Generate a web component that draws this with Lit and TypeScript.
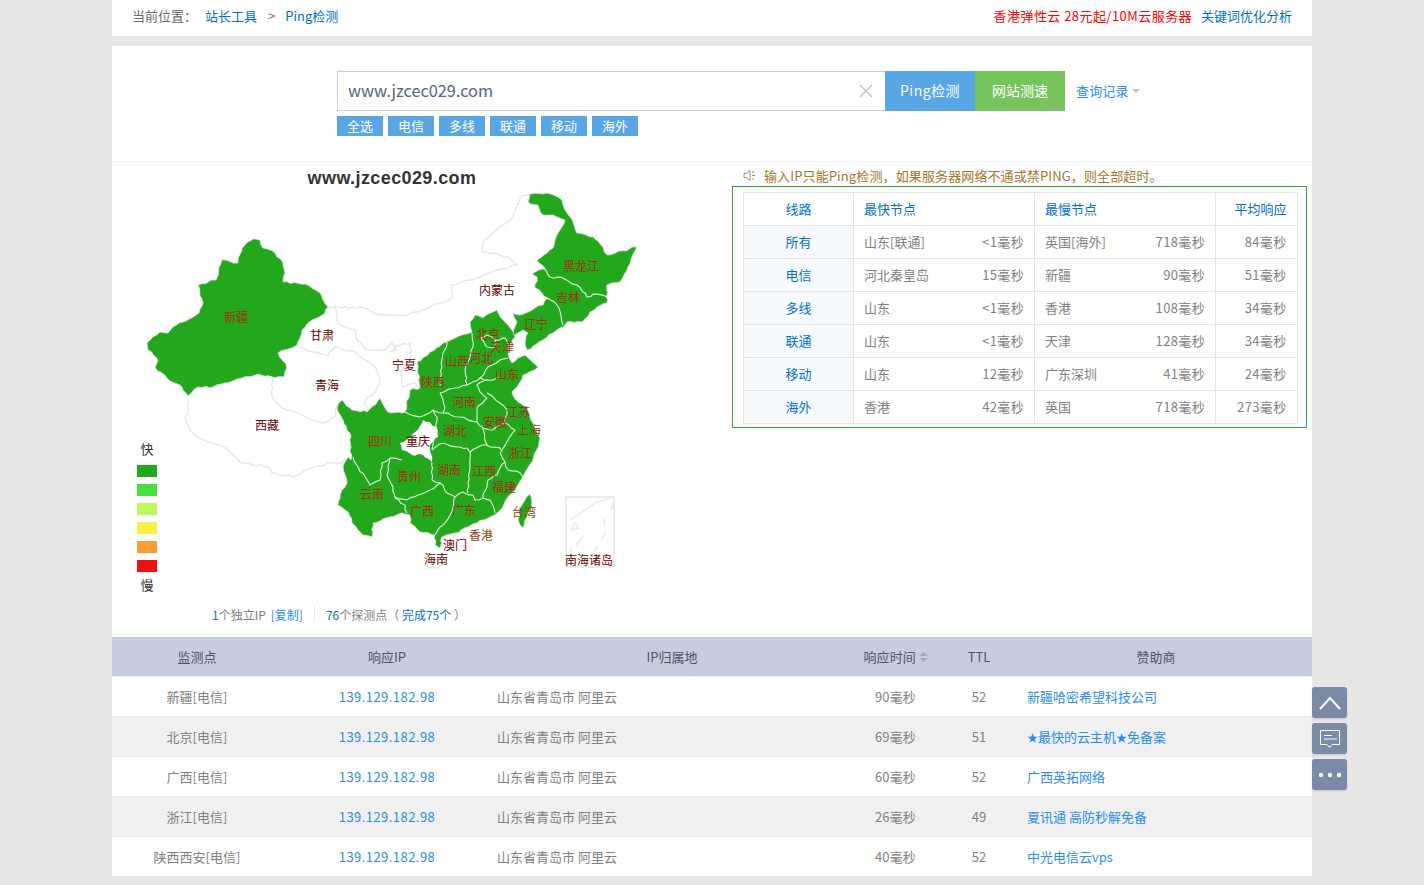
import { LitElement, html, css, svg } from "lit";
import { customElement } from "lit/decorators.js";

const summary = [
  ["所有", "山东[联通]", "<1毫秒", "英国[海外]", "718毫秒", "84毫秒"],
  ["电信", "河北秦皇岛", "15毫秒", "新疆", "90毫秒", "51毫秒"],
  ["多线", "山东", "<1毫秒", "香港", "108毫秒", "34毫秒"],
  ["联通", "山东", "<1毫秒", "天津", "128毫秒", "34毫秒"],
  ["移动", "山东", "12毫秒", "广东深圳", "41毫秒", "24毫秒"],
  ["海外", "香港", "42毫秒", "英国", "718毫秒", "273毫秒"],
];

const results = [
  ["新疆[电信]", "90毫秒", "52", "新疆哈密希望科技公司"],
  ["北京[电信]", "69毫秒", "51", "★最快的云主机★免备案"],
  ["广西[电信]", "60毫秒", "52", "广西英拓网络"],
  ["浙江[电信]", "26毫秒", "49", "夏讯通 高防秒解免备"],
  ["陕西西安[电信]", "40毫秒", "52", "中光电信云vps"],
];

const chips = ["全选", "电信", "多线", "联通", "移动", "海外"];
const legend = ["#23a71d", "#43e240", "#bdf75c", "#f9ef47", "#fb9b35", "#e91313"];

// map shapes, in page coordinates (the svg viewBox starts at the panel's corner)
const green = [
  "253,239 260,240 263,248 275,253 283,263 285,273 283,282 305,284 320,293 328,307 325,313 312,320 302,330 297,345 278,353 287,368 284,377 272,377 258,374 242,378 225,383 213,387 198,387 188,396 182,387 167,378 155,367 158,360 148,350 147,343 160,332 168,333 173,327 183,322 199,313 203,303 198,285 216,280 222,260 238,263 242,248",
  "530,194 547,193 562,200 567,213 574,225 577,233 593,237 603,247 607,255 637,247 628,267 620,282 607,285 607,303 597,307 582,322 567,322 563,327 543,340 527,350 525,343 528,333 523,330 510,337 517,322 513,313 520,315 543,305 548,298 535,288 537,277 532,274 545,268 537,260 553,248 560,230 565,220 553,215 543,215 538,205 528,202",
  "470,322 475,315 483,318 497,310 503,320 508,325 515,337 508,347 510,360 512,363 525,355 538,367 523,375 517,387 512,392 518,402 527,408 533,423 540,438 533,460 523,477 512,493 497,513 477,523 468,527 455,533 442,537 440,548 435,545 435,535 420,532 410,523 410,515 402,513 390,517 373,523 372,537 363,535 352,523 348,512 338,505 340,495 347,483 343,467 348,457 351,460 350,433 343,420 337,408 342,400 352,410 367,412 380,398 388,412 402,413 405,412 410,390 420,388 417,362 430,352 443,343 462,335 472,332",
  "530,494 532,503 527,517 523,528 518,520 520,508 525,500",
];

const chongqing = "423,420 430,422 438,430 438,437 430,445 432,462 423,455 412,455 402,450 400,443 410,437 422,423";

const whiteLines = [
  "543,268 550,277 563,278 577,285 587,297 597,294 607,297",
  "547,298 557,305 563,325",
  "353,457 358,467 370,485 380,480 382,463 390,458 402,460",
  "390,458 387,475 393,487 395,498 405,505 407,513",
  "395,497 407,500 418,495 430,490 440,483 447,493 455,497 463,492 473,495 475,500 483,498 490,500 495,513",
  "455,497 453,508 443,525 435,535",
  "432,462 432,480 440,483",
  "432,450 443,443 457,447 467,448 470,452",
  "470,452 470,467 468,483 468,493",
  "500,452 505,462 497,475 488,480 483,498",
  "470,452 483,445 500,448 502,452",
  "505,462 508,470 520,473 523,477",
  "433,410 443,413 460,417 477,422 482,427 487,445",
  "405,412 420,417 433,410 437,417 435,437 432,450",
  "440,393 445,408 443,413",
  "440,393 455,388 467,385 480,378 487,380",
  "477,422 477,408 487,398 480,392 477,385 487,380 500,378",
  "487,393 500,403 507,410 505,423 515,430",
  "482,427 493,430 505,423",
  "515,430 508,440 502,450",
  "447,342 442,360 440,387",
  "472,333 473,347 465,370 467,385",
  "480,378 488,367 500,360 508,358",
  "480,338 487,335 495,340 495,347 487,347 480,338",
  "495,340 505,338 510,350",
];

const greyLines = [
  "530,194 520,198 513,217 493,233 483,243 482,252 493,253 508,257 517,265 497,270 477,278 452,285 452,298 430,307 407,315 380,315 365,308 328,307",
  "335,307 338,323 355,330 357,340 368,350 385,350 392,343 397,350 390,352 395,346 410,343 411,357 400,373 403,387 415,383 420,388",
  "297,345 312,352 328,355 335,347 355,352 375,367 380,378 375,392 365,400 367,410",
  "272,378 272,397 282,408 302,415 322,423 335,417 338,403",
  "188,397 188,413 185,418 190,430 197,437 225,448 242,463 268,467 272,473 293,477 312,468 328,463 343,463 345,458",
  "427,563 437,560 445,560 437,568 428,568 427,563",
];

const southSea = [
  "570,520 582,512 595,503 610,498",
  "575,522 571,530 578,528 575,522",
  "576,545 583,537",
  "570,555 572,548",
  "604,518 605,526",
  "601,540 606,532",
  "592,555 598,546",
  "611,510 614,501",
];

// [name, x, y, kind] kind: g = on green, w = on white, b = at the coast
const labels: [string, number, number, string][] = [
  ["新疆", 236, 317, "g"], ["甘肃", 322, 335, "w"], ["青海", 327, 385, "w"], ["西藏", 267, 425, "w"],
  ["内蒙古", 497, 290, "w"], ["黑龙江", 581, 266, "g"], ["吉林", 568, 297, "g"], ["辽宁", 536, 324, "g"],
  ["北京", 488, 334, "g"], ["天津", 502, 347, "g"], ["河北", 481, 358, "g"], ["山西", 457, 361, "g"],
  ["宁夏", 404, 365, "w"], ["陕西", 433, 382, "g"], ["山东", 507, 374, "g"], ["河南", 464, 402, "g"],
  ["江苏", 518, 412, "g"], ["安徽", 495, 422, "g"], ["上海", 529, 430, "b"], ["湖北", 455, 431, "g"],
  ["四川", 380, 441, "g"], ["重庆", 418, 441, "w"], ["浙江", 520, 453, "g"], ["湖南", 449, 470, "g"],
  ["江西", 484, 471, "g"], ["贵州", 409, 476, "g"], ["福建", 504, 487, "g"], ["云南", 372, 494, "g"],
  ["广西", 422, 511, "g"], ["广东", 464, 510, "g"], ["台湾", 524, 512, "b"], ["香港", 481, 535, "b"],
  ["澳门", 455, 545, "w"], ["海南", 436, 559, "w"], ["南海诸岛", 589, 560, "w"],
];

// breaks long straight edges into small wobbly steps so borders read like a map
function rough(points: string, closed = false) {
  const pts = points.split(" ").map((p) => p.split(",").map(Number));
  if (closed) pts.push(pts[0]);
  const out: string[] = [];
  for (let i = 0; i < pts.length - 1; i++) {
    const [x1, y1] = pts[i];
    const [x2, y2] = pts[i + 1];
    const steps = Math.max(1, Math.round(Math.hypot(x2 - x1, y2 - y1) / 4));
    for (let s = 0; s < steps; s++) {
      const t = s / steps;
      const x = x1 + (x2 - x1) * t;
      const y = y1 + (y2 - y1) * t;
      const nx = s === 0 ? 0 : Math.sin(x * 1.7 + y * 0.9) * 0.9;
      const ny = s === 0 ? 0 : Math.cos(x * 0.8 - y * 1.6) * 0.9;
      out.push(`${(x + nx).toFixed(1)},${(y + ny).toFixed(1)}`);
    }
  }
  if (!closed) out.push(pts[pts.length - 1].join(","));
  return out.join(" ");
}

@customElement("app-root")
export class AppRoot extends LitElement {
  static styles = css`
    :host {
      display: block;
      height: 885px;
      overflow: hidden;
      background: #e7e7e7;
      font-family: "Noto Sans CJK SC", "Noto Sans", sans-serif;
      font-size: 13px;
      color: #808080;
    }

    a { color: #0070c8; text-decoration: none; }

    .page { width: 1200px; margin: 0 auto; }

    .crumbs {
      height: 36px;
      padding: 0 20px;
      background: #fff;
      display: flex;
      align-items: center;
      justify-content: space-between;
      line-height: 32px;
      padding-bottom: 4px;
      box-sizing: border-box;
    }
    .crumbs .path { display: flex; color: #666; }
    .crumbs .here { margin-right: 8px; }
    .crumbs .sep { margin: 0 10px 0 11px; color: #777; }
    .crumbs .red { color: #f00; margin-right: 6px; letter-spacing: 0.45px; }

    .main { margin-top: 10px; background: #fff; }

    .search {
      height: 116px;
      box-sizing: border-box;
      padding: 25px 0 0 225px;
      border-bottom: 1px solid #f3f3f3;
    }
    .search-row { display: flex; align-items: center; height: 40px; }
    .input {
      width: 548px;
      height: 40px;
      box-sizing: border-box;
      border: 1px solid #c8ccd6;
      border-right: none;
      padding: 0 12px 0 10px;
      display: flex;
      align-items: center;
      justify-content: space-between;
      font-size: 16.3px;
      color: #566284;
    }
    .input span { margin-top: -2px; }
    .btn {
      width: 90px;
      height: 40px;
      line-height: 38px;
      text-align: center;
      color: #fff;
      font-size: 14px;
    }
    .btn.ping { background: #58a6e4; letter-spacing: 0.5px; }
    .btn.speed { background: #75c35c; }
    .history {
      margin: -2px 0 0 11px;
      color: #2a8ee8;
      display: flex;
      align-items: center;
      letter-spacing: 0.15px;
    }
    .caret {
      margin: 2px 0 0 3px;
      border: 4px solid transparent;
      border-top-color: #c4c4c4;
      border-bottom: none;
    }
    .chips { display: flex; gap: 5px; margin-top: 5px; }
    .chip {
      width: 46px;
      height: 20px;
      line-height: 19px;
      text-align: center;
      background: #58a6e4;
      color: #fff;
    }

    .middle {
      height: 475px;
      display: grid;
      grid-template-columns: 620px 575px;
    }
    .map { display: block; }
    .map text { font-size: 12px; text-anchor: middle; }
    .map .g { fill: #a32c12; }
    .map .w { fill: #660000; }
    .map .b { fill: #8a4210; }
    .map .legend { fill: #333; font-size: 13px; }
    .map .title {
      font-family: "Liberation Sans", sans-serif;
      font-size: 18px;
      font-weight: 700;
      letter-spacing: 0.4px;
      fill: #333;
    }
    .stats {
      display: flex;
      align-items: center;
      height: 20px;
      margin-top: 4px;
      padding-left: 100px;
      font-size: 12px;
      white-space: pre;
    }
    .stats b { font-weight: 400; color: #0070c8; }
    .stats .copy { color: #2a8ee8; margin-left: 5px; }
    .stats .bar { width: 1px; height: 16px; background: #e8e8e8; margin: 0 11px; }

    .notice {
      height: 24px;
      padding-left: 11px;
      display: flex;
      align-items: center;
      gap: 8px;
      color: #a5752c;
      padding-top: 3px;
      box-sizing: border-box;
      letter-spacing: 0.12px;
    }
    .box {
      height: 242px;
      box-sizing: border-box;
      border: 1px solid #2ea32e;
      padding: 5px 9px 3px 10px;
    }
    table {
      width: 554px;
      border-collapse: collapse;
      table-layout: fixed;
    }
    td, th {
      height: 30px;
      padding: 0 10px 2px;
      border: 1px solid #e4e4e4;
      font-weight: 400;
      text-align: left;
    }
    th { color: #0070c8; }
    .route { text-align: center; color: #0070c8; padding: 0 0 2px; }
    td.route { background: #f7fafd; }
    .split { display: flex; justify-content: space-between; }
    .num { letter-spacing: 0.35px; }
    td.avg, th.avg { text-align: right; padding-right: 10.5px; }

    .row {
      display: grid;
      grid-template-columns: 170px 210px 360px 106px 42px 312px;
      align-items: center;
      height: 40px;
      box-sizing: border-box;
      border-bottom: 1px solid #e8e8e8;
      background: #fff;
    }
    .row:nth-child(odd) { background: #f0f0f0; }
    .row.head { background: #c6cde0; color: #555; height: 40px; }
    .c { text-align: center; }
    .time { text-align: right; padding-right: 42px; letter-spacing: 0.15px; }
    .row.head .time {
      padding-right: 31px;
      display: flex;
      justify-content: flex-end;
      align-items: center;
      gap: 4px;
    }
    .ip { color: #2a8ee8; letter-spacing: 0.45px; }
    .place { padding-left: 5px; }
    .sponsor { padding-left: 27px; }
    .sponsor a { color: #2a8ee8; }
    .star { font-size: 11px; }
    .sort { display: block; }

    .side {
      position: fixed;
      left: 1312px;
      top: 687px;
      display: flex;
      flex-direction: column;
      gap: 5px;
    }
    .side div {
      width: 35px;
      height: 31px;
      background: #7c8aa8;
      border-radius: 3px;
      box-shadow: 0 1px 2px rgba(0, 0, 0, 0.15);
      display: flex;
      align-items: center;
      justify-content: center;
    }
  `;

  renderMap() {
    return svg`
      ${greyLines.map((p) => svg`<polyline points=${rough(p)} fill="none" stroke="#e6e6e6" stroke-width="1.4"/>`)}
      ${green.map((p) => svg`<polygon points=${rough(p, true)} fill="#23a71d" stroke="#d8e8d6" stroke-width="0.8"/>`)}
      <polygon points=${rough(chongqing, true)} fill="#fff"/>
      ${whiteLines.map((p) => svg`<polyline points=${rough(p)} fill="none" stroke="#fff" stroke-width="1.1" opacity="0.85"/>`)}
      <rect x="566" y="497" width="48" height="70" fill="#fff" stroke="#e3e3e3" stroke-width="1.5"/>
      ${southSea.map((p) => svg`<polyline points=${p} fill="none" stroke="#e6e6e6" stroke-width="1.3"/>`)}
      ${labels.map(([name, x, y, kind]) => svg`<text x=${x} y=${y + 5} class=${kind}>${name}</text>`)}
      <text x="392" y="184" class="title">www.jzcec029.com</text>
      <text x="147" y="454" class="legend">快</text>
      ${legend.map((c, i) => svg`<rect x="137" y=${465 + i * 19} width="20" height="12" fill=${c}/>`)}
      <text x="147" y="590" class="legend">慢</text>
    `;
  }

  sponsor(name: string) {
    return name.split("★").map((part, i) => (i ? html`<span class="star">★</span>${part}` : part));
  }

  render() {
    return html`
      <div class="page">
        <div class="crumbs">
          <div class="path">
            <span class="here">当前位置：</span>
            <a href="#">站长工具</a><span class="sep">&gt;</span><a href="#">Ping检测</a>
          </div>
          <div>
            <a href="#" class="red">香港弹性云 28元起/10M云服务器</a>
            <a href="#">关键词优化分析</a>
          </div>
        </div>

        <div class="main">
          <div class="search">
            <div class="search-row">
              <div class="input">
                <span>www.jzcec029.com</span>
                <svg width="14" height="14" viewBox="0 0 14 14">
                  <path d="M1 1L13 13M13 1L1 13" stroke="#bbb" stroke-width="1.2" fill="none"/>
                </svg>
              </div>
              <div class="btn ping">Ping检测</div>
              <div class="btn speed">网站测速</div>
              <a class="history" href="#">查询记录<span class="caret"></span></a>
            </div>
            <div class="chips">
              ${chips.map((c) => html`<div class="chip">${c}</div>`)}
            </div>
          </div>

          <div class="middle">
            <div>
              <svg class="map" width="620" height="438" viewBox="112 162 620 438">${this.renderMap()}</svg>
              <div class="stats"><b>1</b>个独立IP<span class="copy">[复制]</span><span class="bar"></span><b>76</b>个探测点（ <b>完成75个</b> ）</div>
            </div>
            <div>
              <div class="notice">
                <svg width="13" height="13" viewBox="0 0 13 13" fill="none" stroke="#9a8a6c" stroke-width="1">
                  <path d="M1 4.5H3.5L7 1.5V11.5L3.5 8.5H1Z"/>
                  <path d="M9 3.5L11 2.5M9 6.5H12M9 9.5L11 10.5"/>
                </svg>
                <span>输入IP只能Ping检测，如果服务器网络不通或禁PING，则全部超时。</span>
              </div>
              <div class="box">
                <table>
                  <colgroup>
                    <col style="width:110px" /><col style="width:181px" /><col style="width:181px" /><col style="width:82px" />
                  </colgroup>
                  <tr>
                    <th class="route">线路</th>
                    <th>最快节点</th>
                    <th>最慢节点</th>
                    <th class="avg">平均响应</th>
                  </tr>
                  ${summary.map(
                    (r) => html`<tr>
                      <td class="route">${r[0]}</td>
                      <td><div class="split"><span>${r[1]}</span><span class="num">${r[2]}</span></div></td>
                      <td><div class="split"><span>${r[3]}</span><span class="num">${r[4]}</span></div></td>
                      <td class="avg num">${r[5]}</td>
                    </tr>`
                  )}
                </table>
              </div>
            </div>
          </div>

          <div class="results">
            <div class="row head">
              <div class="c">监测点</div>
              <div class="c">响应IP</div>
              <div class="c">IP归属地</div>
              <div class="time">响应时间
                <svg class="sort" width="7" height="10" viewBox="0 0 7 10" fill="#a0a6b4">
                  <path d="M3.5 0L7 4H0ZM3.5 10L0 6H7Z"/>
                </svg>
              </div>
              <div class="c">TTL</div>
              <div class="c">赞助商</div>
            </div>
            ${results.map(
              (r) => html`<div class="row">
                <div class="c">${r[0]}</div>
                <div class="c ip">139.129.182.98</div>
                <div class="place">山东省青岛市 阿里云</div>
                <div class="time">${r[1]}</div>
                <div class="c">${r[2]}</div>
                <div class="sponsor"><a href="#">${this.sponsor(r[3])}</a></div>
              </div>`
            )}
          </div>
        </div>
      </div>

      <div class="side">
        <div>
          <svg width="24" height="16" viewBox="0 0 24 16" fill="none" stroke="#fff" stroke-width="2">
            <path d="M2 14L12 3L22 14"/>
          </svg>
        </div>
        <div>
          <svg width="22" height="20" viewBox="0 0 22 20" fill="none" stroke="#fff" stroke-width="1">
            <path d="M1.5 1.5H20.5V15.5H13L10.5 18.5L8 15.5H1.5Z"/>
            <path d="M5 6.5H13M5 10H18"/>
          </svg>
        </div>
        <div>
          <svg width="24" height="6" viewBox="0 0 24 6" fill="#fff">
            <circle cx="3" cy="3" r="2.2"/><circle cx="12" cy="3" r="2.2"/><circle cx="21" cy="3" r="2.2"/>
          </svg>
        </div>
      </div>
    `;
  }
}
